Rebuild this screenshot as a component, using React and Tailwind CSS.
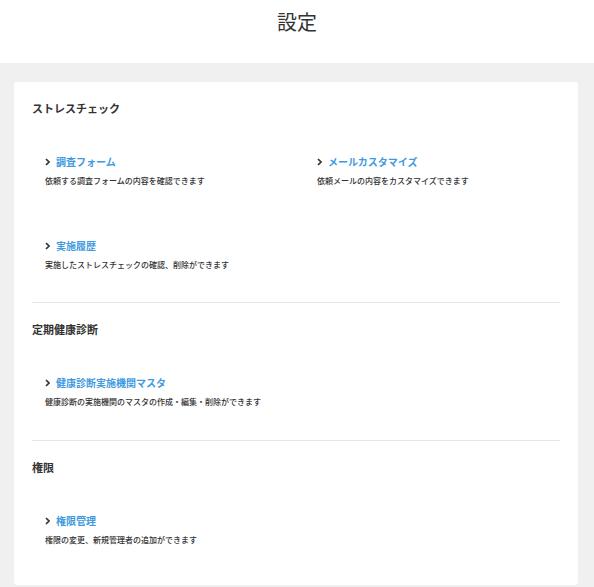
import React from "react";

const sections = [
  {
    title: "ストレスチェック",
    pt: "pt-[18px]",
    pb: "pb-[31px]",
    items: [
      { label: "調査フォーム", desc: "依頼する調査フォームの内容を確認できます" },
      { label: "メールカスタマイズ", desc: "依頼メールの内容をカスタマイズできます" },
      { label: "実施履歴", desc: "実施したストレスチェックの確認、削除ができます" },
    ],
  },
  {
    title: "定期健康診断",
    pt: "pt-[18px]",
    pb: "pb-[32px]",
    items: [
      { label: "健康診断実施機関マスタ", desc: "健康診断の実施機関のマスタの作成・編集・削除ができます" },
    ],
  },
  {
    title: "権限",
    pt: "pt-[18px]",
    pb: "pb-[39px]",
    items: [{ label: "権限管理", desc: "権限の変更、新規管理者の追加ができます" }],
  },
];

function Chevron() {
  return (
    <svg width="5" height="8" viewBox="0 0 5 8" className="shrink-0">
      <polyline points="1,1 4,4 1,7" fill="none" stroke="#333" strokeWidth="1.6" />
    </svg>
  );
}

export default function App() {
  return (
    <div
      className="min-h-[587px] bg-[#f0f0f0] text-[#333]"
      style={{ fontFamily: '"Noto Sans CJK JP", "Noto Sans", sans-serif' }}
    >
      <header className="h-[63px] bg-white flex justify-center pt-[8px]">
        <h1 className="text-[20px] leading-[28px] font-normal text-[#333]">設定</h1>
      </header>
      <div className="pl-[14px] pr-[16px] pt-[19px] pb-[4px]">
        <div className="bg-white rounded-[3px] px-[18px]">
          {sections.map((s, i) => (
            <section
              key={s.title}
              className={(i > 0 ? "border-t border-[#e6e6e6] " : "") + s.pt + " " + s.pb}
            >
              <h2 className="text-[11px] leading-[16px] font-bold">{s.title}</h2>
              <div className="grid grid-cols-2 gap-x-4 gap-y-[52px] mt-[39px]">
                {s.items.map((it) => (
                  <div key={it.label} className="px-[13px]">
                    <div className="flex items-center gap-[6px] h-[14px]">
                      <Chevron />
                      <a className="text-[10px] leading-[14px] font-bold text-[#3f9ae0] whitespace-nowrap">
                        {it.label}
                      </a>
                    </div>
                    <p className="mt-[6px] text-[8px] leading-[12px] font-medium text-[#333] whitespace-nowrap">
                      {it.desc}
                    </p>
                  </div>
                ))}
              </div>
            </section>
          ))}
        </div>
      </div>
    </div>
  );
}
